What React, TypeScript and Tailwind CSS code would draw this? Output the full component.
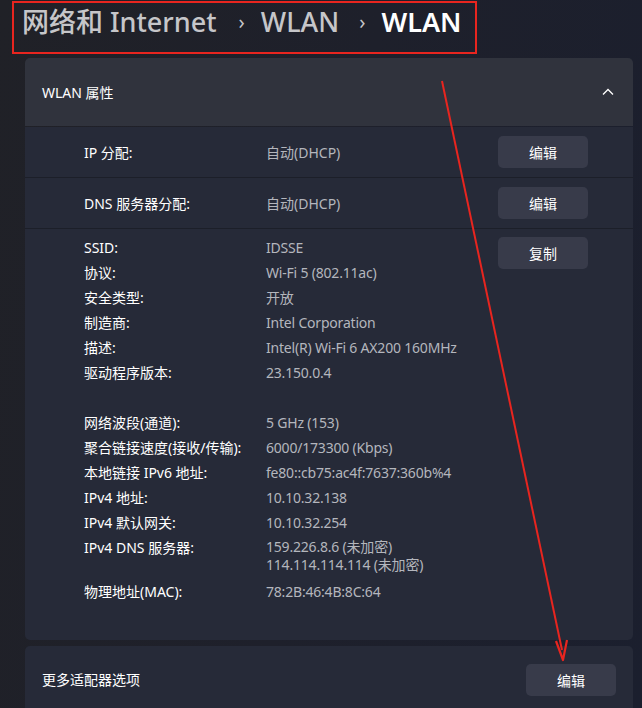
import React from "react";

const Btn = ({ children, className = "" }: { children: React.ReactNode; className?: string }) => (
  <div
    className={
      "w-[90px] h-[32px] rounded-[5px] bg-[#383b4a] flex items-center justify-center text-[14px] text-white " +
      className
    }
  >
    {children}
  </div>
);

const Row = ({ label, value }: { label: string; value: string }) => (
  <div className="flex leading-[25px] h-[25px]">
    <div className="w-[182px] text-white">{label}</div>
    <div className="text-[#b4b6bd] tracking-[-0.2px]">{value}</div>
  </div>
);

export default function App() {
  return (
    <div
      className="relative w-[642px] h-[708px] overflow-hidden bg-[linear-gradient(100deg,#202127_0%,#1e202b_50%,#1b1f2e_100%)] text-[14px]"
      style={{ fontFamily: '"Noto Sans", "Noto Sans CJK SC", sans-serif' }}
    >
      {/* breadcrumb with annotation border */}
      <div className="ml-[12px] mt-[1px] w-[465px] h-[53px] border-2 border-[#e8251f] flex items-center pl-[8px] pb-[12px] text-[27px] leading-none">
        <span className="text-[#c6c6c9] font-medium">网络和 Internet</span>
        <span className="text-[#c6c6c9] text-[20px] ml-[22px] mr-[16px]">›</span>
        <span className="text-[#c6c6c9] font-medium">WLAN</span>
        <span className="text-[#c6c6c9] text-[20px] ml-[20px] mr-[16px]">›</span>
        <span className="text-white font-semibold">WLAN</span>
      </div>

      {/* properties card */}
      <div className="ml-[25px] mr-[9px] mt-[4px]">
        <div className="h-[68px] rounded-t-[5px] bg-[#30333d] flex items-center justify-between pl-[17px] pr-[19px]">
          <span className="text-white">WLAN 属性</span>
          <svg width="12" height="8" viewBox="0 0 12 8" fill="none">
            <path d="M1 6.5 L6 1.5 L11 6.5" stroke="#ffffff" strokeWidth="1.3" />
          </svg>
        </div>
        <div className="mt-[1px] bg-[#262a38] rounded-b-[5px] h-[513px]">
          <div className="h-[51px] flex items-center pl-[59px] border-b border-[#1c1f29]">
            <div className="w-[182px] text-white">IP 分配:</div>
            <div className="w-[232px] text-[#b4b6bd]">自动(DHCP)</div>
            <Btn>编辑</Btn>
          </div>
          <div className="h-[51px] flex items-center pl-[59px] border-b border-[#1c1f29]">
            <div className="w-[182px] text-white">DNS 服务器分配:</div>
            <div className="w-[232px] text-[#b4b6bd]">自动(DHCP)</div>
            <Btn>编辑</Btn>
          </div>
          <div className="flex pl-[59px] pt-[6px]">
            <div className="w-[414px]">
              <Row label="SSID:" value="IDSSE" />
              <Row label="协议:" value="Wi-Fi 5 (802.11ac)" />
              <Row label="安全类型:" value="开放" />
              <Row label="制造商:" value="Intel Corporation" />
              <Row label="描述:" value="Intel(R) Wi-Fi 6 AX200 160MHz" />
              <Row label="驱动程序版本:" value="23.150.0.4" />
              <div className="h-[25px]" />
              <Row label="网络波段(通道):" value="5 GHz (153)" />
              <Row label="聚合链接速度(接收/传输):" value="6000/173300 (Kbps)" />
              <Row label="本地链接 IPv6 地址:" value="fe80::cb75:ac4f:7637:360b%4" />
              <Row label="IPv4 地址:" value="10.10.32.138" />
              <Row label="IPv4 默认网关:" value="10.10.32.254" />
              <div className="flex">
                <div className="w-[182px] text-white leading-[25px]">IPv4 DNS 服务器:</div>
                <div className="text-[#b4b6bd] tracking-[-0.2px] leading-[18px] pt-[3px] pb-[5px]">
                  <div>159.226.8.6 (未加密)</div>
                  <div>114.114.114.114 (未加密)</div>
                </div>
              </div>
              <Row label="物理地址(MAC):" value="78:2B:46:4B:8C:64" />
            </div>
            <Btn className="mt-[2px]">复制</Btn>
          </div>
        </div>

        <div className="mt-[6px] h-[80px] rounded-t-[5px] bg-[#262a38] flex items-start justify-between pl-[17px] pr-[17px] pt-[18px]">
          <span className="text-white leading-[32px]">更多适配器选项</span>
          <Btn>编辑</Btn>
        </div>
      </div>

      {/* red arrow annotation */}
      <svg className="absolute left-0 top-0 pointer-events-none" width="642" height="708">
        <line x1="442" y1="81" x2="562" y2="650" stroke="#e8251f" strokeWidth="2" />
        <path d="M556 641 L563 660 L567 640" fill="none" stroke="#e8251f" strokeWidth="2.2" strokeLinejoin="round" />
      </svg>
    </div>
  );
}
